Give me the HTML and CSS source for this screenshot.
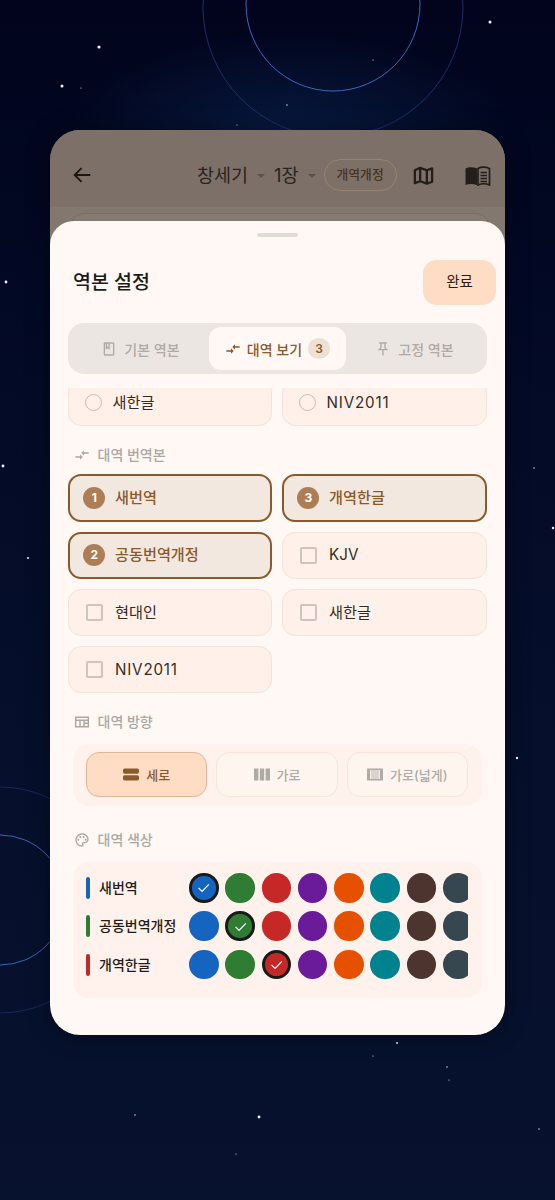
FILE: index.html
```html
<!DOCTYPE html>
<html lang="ko">
<head>
<meta charset="utf-8">
<title>역본 설정</title>
<link rel="stylesheet" href="styles.css">
</head>
<body>
<svg class="sky" viewBox="0 0 555 1200" width="555" height="1200" aria-hidden="true">
  <g fill="none">
    <circle cx="333" cy="4" r="87" stroke="#3a68c0" stroke-width="1"/>
    <circle cx="333" cy="7" r="130" stroke="#1f3a78" stroke-width="0.8"/>
    <circle cx="0" cy="900" r="65" stroke="#3a64b8" stroke-width="1"/>
    <circle cx="0" cy="900" r="113" stroke="#1b2f66" stroke-width="0.8"/>
  </g>
  <g fill="#eef3ff">
    <circle cx="99" cy="47" r="1.6"/><circle cx="62" cy="86" r="1.5"/><circle cx="490" cy="22" r="1.5"/>
    <circle cx="81" cy="88" r="0.6"/><circle cx="373" cy="60" r="0.6"/><circle cx="287" cy="105" r="0.7"/><circle cx="237" cy="125" r="0.6"/>
    <circle cx="6" cy="282" r="1.4"/><circle cx="3" cy="466" r="1.4"/><circle cx="28" cy="558" r="1"/>
    <circle cx="534" cy="468" r="0.7"/><circle cx="553" cy="528" r="1.2"/><circle cx="517" cy="758" r="1.2"/>
    <circle cx="397" cy="1043" r="0.9"/><circle cx="373" cy="1056" r="0.6"/><circle cx="447" cy="1067" r="0.7"/><circle cx="449" cy="1080" r="0.6"/>
    <circle cx="135" cy="1115" r="0.7"/><circle cx="259" cy="1117" r="1.4"/><circle cx="236" cy="1154" r="0.6"/><circle cx="539" cy="1129" r="0.7"/>
  </g>
</svg>

<main class="device">
  <header class="topbar">
    <svg class="back" viewBox="0 0 24 24"><path d="M21 12H4.500M11.500 4.500 4 12l7.500 7.500" fill="none" stroke="currentColor" stroke-width="2"/></svg>
    <span class="book-name">창세기</span><i class="caret"></i>
    <span class="chapter">1장</span><i class="caret"></i>
    <span class="chip">개역개정</span>
    <svg class="map" viewBox="0 0 24 24"><path d="M3 6.500 8.500 4l7 2.500L21 4.500v14L15.500 20.500 8.500 18 3 20ZM8.500 4v14M15.500 6.500v14" fill="none" stroke="currentColor" stroke-width="2.400" stroke-linejoin="round"/></svg>
    <svg class="reader" viewBox="0 0 26 21"><path d="M1 3.500C4 2 8.500 1.800 12.500 3.500V20C8.500 18.500 4 18.500 1 20Z" fill="currentColor"/><path d="M13.500 3.500C17 1.800 21.500 2 25 3.500V20C21.500 18.500 17 18.500 13.500 20Z" fill="none" stroke="currentColor" stroke-width="1.700"/><path d="M16 7.500h6.500M16 10.500h6.500M16 13.500h6.500M16 16.500h6.500" stroke="currentColor" stroke-width="1.300"/></svg>
  </header>
  <div class="behind"><div class="behind-card"></div></div>

  <section class="sheet">
    <div class="handle"></div>
    <div class="sheet-head">
      <h1 class="sheet-title">역본 설정</h1>
      <button class="done">완료</button>
    </div>

    <div class="tabs">
      <div class="tab">
        <svg class="tab-icon" viewBox="0 0 24 24"><path d="M18 2H6c-1.100 0-2 .9-2 2v16c0 1.100.9 2 2 2h12c1.100 0 2-.9 2-2V4c0-1.100-.9-2-2-2zM9 4h2v5l-1-.75L9 9V4zm9 16H6V4h1v9l3-2.250L13 13V4h5v16z" fill="currentColor"/></svg>
        <span>기본 역본</span>
      </div>
      <div class="tab tab-active">
        <svg class="tab-icon" viewBox="0 0 24 24"><path d="M9.010 14H2v2h7.010v3L13 15l-3.990-4v3zm5.980-1v-3H22V8h-7.010V5L11 9l3.990 4z" fill="currentColor"/></svg>
        <span>대역 보기</span>
        <span class="tab-badge">3</span>
      </div>
      <div class="tab">
        <svg class="tab-icon" viewBox="0 0 24 24"><path d="M14 4v5c0 1.120.37 2.160 1 3H9c.65-.86 1-1.900 1-3V4h4m3-2H7c-.55 0-1 .45-1 1s.45 1 1 1h1v5c0 1.660-1.340 3-3 3v2h5.970v7l1 1 1-1v-7H19v-2c-1.660 0-3-1.340-3-3V4h1c.55 0 1-.45 1-1s-.45-1-1-1z" fill="currentColor"/></svg>
        <span>고정 역본</span>
      </div>
    </div>

    <div class="scroll">
      <div class="grid grid-clipped">
        <div class="opt opt-radio"><i class="radio"></i><span>새한글</span></div>
        <div class="opt opt-radio"><i class="radio"></i><span class="wide">NIV2011</span></div>
      </div>

      <div class="label label-first">
        <svg class="label-icon" viewBox="0 0 24 24"><path d="M9.010 14H2v2h7.010v3L13 15l-3.990-4v3zm5.980-1v-3H22V8h-7.010V5L11 9l3.990 4z" fill="currentColor"/></svg>
        <span>대역 번역본</span>
      </div>
      <div class="grid">
        <div class="opt opt-on"><i class="num">1</i><span>새번역</span></div>
        <div class="opt opt-on"><i class="num">3</i><span>개역한글</span></div>
        <div class="opt opt-on"><i class="num">2</i><span>공동번역개정</span></div>
        <div class="opt"><i class="check"></i><span>KJV</span></div>
        <div class="opt"><i class="check"></i><span>현대인</span></div>
        <div class="opt"><i class="check"></i><span>새한글</span></div>
        <div class="opt"><i class="check"></i><span class="wide">NIV2011</span></div>
      </div>

      <div class="label label-dir">
        <svg class="label-icon" viewBox="0 0 24 24"><path d="M2.500 5h19v14h-19zM2.500 9.500h19M9 9.500V19M15 14h6.500M15 9.500V19" fill="none" stroke="currentColor" stroke-width="2.200"/></svg>
        <span>대역 방향</span>
      </div>
      <div class="panel dir-panel">
        <div class="dir dir-on">
          <svg class="dir-icon" viewBox="0 0 16 13"><rect x="0" y="0.500" width="16" height="5.300" rx="1.800" fill="currentColor"/><rect x="0" y="7.300" width="16" height="5.300" rx="1.800" fill="currentColor"/></svg>
          <span>세로</span>
        </div>
        <div class="dir">
          <svg class="dir-icon" viewBox="0 0 16 13"><path d="M0 .5h4.400v12H0zM5.800 .5h4.400v12H5.800zM11.600 .5H16v12h-4.400z" fill="currentColor"/></svg>
          <span>가로</span>
        </div>
        <div class="dir">
          <svg class="dir-icon" viewBox="0 0 16 13"><path d="M0 .5h16v12H0zM3 2v9h10V2z" fill="currentColor" fill-rule="evenodd"/><path d="M3.800 2h8.400v9H3.800z" fill="currentColor" opacity=".45"/></svg>
          <span>가로(넓게)</span>
        </div>
      </div>

      <div class="label label-color">
        <svg class="label-icon" viewBox="0 0 24 24"><path d="M12 22C6.490 22 2 17.510 2 12S6.490 2 12 2s10 4.040 10 9c0 3.310-2.690 6-6 6h-1.770c-.28 0-.5.220-.5.5 0 .12.050.23.130.33.410.47.640 1.060.640 1.670A2.500 2.500 0 0 1 12 22zm0-18c-4.410 0-8 3.590-8 8s3.590 8 8 8c.28 0 .5-.22.500-.5a.54.54 0 0 0-.14-.35c-.41-.46-.63-1.050-.63-1.650a2.500 2.500 0 0 1 2.500-2.500H16c2.210 0 4-1.790 4-4 0-3.860-3.590-7-8-7z" fill="currentColor"/><circle cx="6.500" cy="11.500" r="1.500" fill="currentColor"/><circle cx="9.500" cy="7.500" r="1.500" fill="currentColor"/><circle cx="14.500" cy="7.500" r="1.500" fill="currentColor"/><circle cx="17.500" cy="11.500" r="1.500" fill="currentColor"/></svg>
        <span>대역 색상</span>
      </div>
      <div class="panel color-panel">
        <div class="color-row">
          <i class="bar c-blue"></i><span class="color-name">새번역</span>
          <div class="swatches">
            <i class="sw c-blue sw-on"><svg viewBox="0 0 24 24"><path d="M5 12.500 10 17.500 19.500 7.500" fill="none" stroke="#fff" stroke-width="1.700"/></svg></i><i class="sw c-green"></i><i class="sw c-red"></i><i class="sw c-purple"></i><i class="sw c-orange"></i><i class="sw c-teal"></i><i class="sw c-brown"></i><i class="sw c-slate"></i>
          </div>
        </div>
        <div class="color-row">
          <i class="bar c-green"></i><span class="color-name">공동번역개정</span>
          <div class="swatches">
            <i class="sw c-blue"></i><i class="sw c-green sw-on"><svg viewBox="0 0 24 24"><path d="M5 12.500 10 17.500 19.500 7.500" fill="none" stroke="#fff" stroke-width="1.700"/></svg></i><i class="sw c-red"></i><i class="sw c-purple"></i><i class="sw c-orange"></i><i class="sw c-teal"></i><i class="sw c-brown"></i><i class="sw c-slate"></i>
          </div>
        </div>
        <div class="color-row">
          <i class="bar c-red"></i><span class="color-name">개역한글</span>
          <div class="swatches">
            <i class="sw c-blue"></i><i class="sw c-green"></i><i class="sw c-red sw-on"><svg viewBox="0 0 24 24"><path d="M5 12.500 10 17.500 19.500 7.500" fill="none" stroke="#fff" stroke-width="1.700"/></svg></i><i class="sw c-purple"></i><i class="sw c-orange"></i><i class="sw c-teal"></i><i class="sw c-brown"></i><i class="sw c-slate"></i>
          </div>
        </div>
      </div>
    </div>
  </section>
</main>
</body>
</html>
```
FILE: styles.css
```css
* { box-sizing: border-box; }
html, body { margin: 0; height: 1200px; overflow: hidden; }
body {
  position: relative;
  padding: 130px 50px 0;
  font-family: Inter, "Noto Sans CJK KR", sans-serif;
  color: #2a211c;
  background:
    radial-gradient(ellipse 230px 110px at 290px 140px, #081a3f 0%, rgba(8,26,63,0) 100%),
    linear-gradient(180deg, #01041c 0%, #030a26 30%, #06102c 70%, #07122e 100%);
}
i { font-style: normal; display: block; }
.sky { position: absolute; left: 0; top: 0; }

.device {
  position: relative;
  width: 455px;
  height: 905px;
  border-radius: 30px;
  overflow: hidden;
  background: #82786f;
  box-shadow: 0 0 24px rgba(0,0,0,.35);
}
.topbar {
  height: 77px;
  background: #7c7068;
  display: flex;
  align-items: center;
  padding: 13px 0 0 21px;
  color: #221c18;
}
.back { width: 22px; height: 22px; color: #1d1713; }
.book-name { margin-left: 104px; font-size: 18.500px; line-height: 24px; color: #2a2420; }
.chapter { font-size: 18.500px; line-height: 24px; color: #2a2420; }
.caret {
  width: 0; height: 0;
  margin: 2px 9px 0;
  border-left: 4px solid transparent;
  border-right: 4px solid transparent;
  border-top: 4px solid #59524c;
}
.chip {
  margin-left: -1px;
  width: 73px; height: 32px;
  border: 1px solid #968473;
  border-radius: 16px;
  background: #85755f22;
  text-align: center;
  font-size: 12.800px;
  font-weight: 500;
  line-height: 29px;
  color: #46331f;
  white-space: nowrap;
}
.map { width: 23px; height: 23px; margin-left: 15px; color: #241e1a; }
.reader { width: 27px; height: 21px; margin-left: 29px; color: #241e1a; }
.behind { height: 828px; padding: 6px 15px 0 20px; }
.behind-card { height: 100%; background: #857b72; border-radius: 14px 14px 0 0; border: 1px solid #786e65; }

.sheet {
  position: absolute;
  left: 0; right: 0; top: 91px; bottom: 0;
  background: #fff8f4;
  border-radius: 24px 24px 30px 30px;
  padding-top: 11.500px;
}
.handle { width: 41px; height: 4.500px; margin: 0 auto; border-radius: 3px; background: #dfdbd8; }
.sheet-head {
  height: 44.500px;
  margin-top: 23px;
  padding: 0 9px 0 23px;
  display: flex;
  align-items: center;
  justify-content: space-between;
}
.sheet-title { margin: 0; font-size: 19.500px; line-height: 26px; font-weight: 500; color: #1e1a17; }
.done {
  width: 73px; height: 44.500px;
  border: 0;
  border-radius: 14px;
  background: #ffdcc4;
  font: 400 14.500px/20px Inter, "Noto Sans CJK KR", sans-serif;
  color: #2c1d12;
  padding: 0;
}

.tabs {
  height: 51px;
  margin: 18.500px 18px 0;
  padding: 4px;
  display: flex;
  background: #ece6e2;
  border-radius: 16px;
}
.tab {
  flex: 1;
  display: flex;
  align-items: center;
  justify-content: center;
  gap: 7px;
  font-size: 14px;
  font-weight: 500;
  color: #aeaaa6;
  border-radius: 12px;
}
.tab-icon { width: 16px; height: 16px; flex: none; }
.tab-active { background: #fff8f4; color: #8b5a2b; gap: 6px; }
.tab-badge {
  width: 22px; height: 21px;
  border-radius: 50%;
  background: #efe0d5;
  text-align: center;
  font-size: 12px;
  line-height: 21px;
  font-weight: 600;
}

.scroll { height: 647px; margin-top: 14px; overflow: hidden; }
.grid {
  padding: 0 18.500px 0 18.300px;
  display: grid;
  grid-template-columns: 1fr 1fr;
  column-gap: 10px;
  row-gap: 10px;
}
.grid-clipped { margin-top: -9px; }
.opt {
  height: 47px;
  display: flex;
  align-items: center;
  padding-left: 16.700px;
  border: 1px solid #f0e4dd;
  border-radius: 13px;
  background: #fff1ea;
  font-size: 15.200px;
  line-height: 20px;
  color: #352b25;
}
.wide { letter-spacing: .8px; }
.opt-radio { gap: 10.900px; }
.radio { width: 17px; height: 17px; margin-left: -1.400px; border: 1.500px solid #c6bdb6; border-radius: 50%; }
.check { width: 17px; height: 17px; margin-right: 12px; border: 2px solid #cdc5bf; border-radius: 2px; flex: none; }
.num {
  width: 22px; height: 22px;
  margin-left: -3.700px; margin-right: 9.700px;
  border-radius: 50%;
  background: #ad7d56;
  color: #fff;
  text-align: center;
  font-size: 12px;
  line-height: 22px;
  font-weight: 700;
  flex: none;
}
.opt-on {
  height: 47.500px;
  background: #f2e8e0;
  border: 2px solid #8b5a2b;
  color: #8b5a2b;
  font-weight: 500;
}

.label {
  height: 20px;
  display: flex;
  align-items: center;
  padding-left: 23.500px;
  gap: 8px;
  font-size: 14px;
  line-height: 20px;
  font-weight: 500;
  color: #aba8a4;
}
.label-icon { width: 16px; height: 16px; flex: none; }
.label-first { margin: 19px 0 9px; }
.label-dir { margin: 18.500px 0 12.500px; }
.label-color { margin: 24px 0 12px; }

.panel { margin: 0 23px; background: #fff2ec; border-radius: 16px; }
.dir-panel { height: 62px; padding: 8px 14px 9px 13px; display: flex; gap: 9px; }
.dir {
  flex: 1;
  display: flex;
  align-items: center;
  justify-content: center;
  gap: 7px;
  border: 1px solid #f5e5db;
  border-radius: 13px;
  background: #fff5ef;
  font-size: 13px;
  line-height: 18px;
  font-weight: 500;
  color: #aeaaa6;
}
.dir-icon { width: 16px; height: 13px; flex: none; }
.dir-on { background: #ffdcc4; border-color: #e0b797; color: #8b5a2b; }

.color-panel { height: 136px; padding: 11px 14px 0 13px; display: flex; flex-direction: column; gap: 8.900px; }
.color-row { height: 29.500px; display: flex; align-items: center; }
.bar { width: 4px; height: 22px; border-radius: 2px; margin-right: 9px; flex: none; }
.color-name { width: 90px; flex: none; font-size: 14px; line-height: 20px; font-weight: 500; color: #241c17; white-space: nowrap; }
.swatches { width: 279px; display: flex; gap: 6.800px; overflow: hidden; }
.sw { width: 29.500px; height: 29.500px; border-radius: 50%; flex: none; }
.sw-on { border: 3px solid #1a1a1a; display: flex; align-items: center; justify-content: center; }
.sw-on svg { width: 17px; height: 17px; }
.c-blue { background: #1565c0; }
.c-green { background: #2e7d32; }
.c-red { background: #c62828; }
.c-purple { background: #6a1b9a; }
.c-orange { background: #e65100; }
.c-teal { background: #00838f; }
.c-brown { background: #4e342e; }
.c-slate { background: #37474f; }
```
